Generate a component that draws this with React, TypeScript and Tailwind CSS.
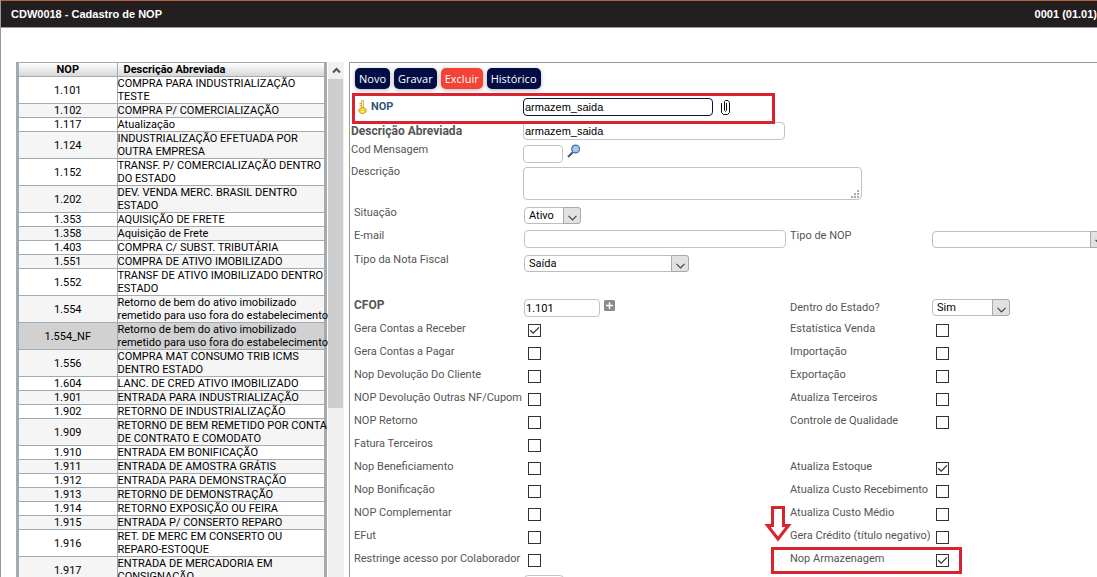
import { useState } from "react";
import type { ReactNode } from "react";

type Nop = { code: string; description: string };

const nops: Nop[] = [
  { code: "1.101", description: "COMPRA PARA INDUSTRIALIZAÇÃO\nTESTE" },
  { code: "1.102", description: "COMPRA P/ COMERCIALIZAÇÃO" },
  { code: "1.117", description: "Atualização" },
  { code: "1.124", description: "INDUSTRIALIZAÇÃO EFETUADA POR\nOUTRA EMPRESA" },
  { code: "1.152", description: "TRANSF. P/ COMERCIALIZAÇÃO DENTRO\nDO ESTADO" },
  { code: "1.202", description: "DEV. VENDA MERC. BRASIL DENTRO\nESTADO" },
  { code: "1.353", description: "AQUISIÇÃO DE FRETE" },
  { code: "1.358", description: "Aquisição de Frete" },
  { code: "1.403", description: "COMPRA C/ SUBST. TRIBUTÁRIA" },
  { code: "1.551", description: "COMPRA DE ATIVO IMOBILIZADO" },
  { code: "1.552", description: "TRANSF DE ATIVO IMOBILIZADO DENTRO\nESTADO" },
  { code: "1.554", description: "Retorno de bem do ativo imobilizado\nremetido para uso fora do estabelecimento" },
  { code: "1.554_NF", description: "Retorno de bem do ativo imobilizado\nremetido para uso fora do estabelecimento" },
  { code: "1.556", description: "COMPRA MAT CONSUMO TRIB ICMS\nDENTRO ESTADO" },
  { code: "1.604", description: "LANC. DE CRED ATIVO IMOBILIZADO" },
  { code: "1.901", description: "ENTRADA PARA INDUSTRIALIZAÇÃO" },
  { code: "1.902", description: "RETORNO DE INDUSTRIALIZAÇÃO" },
  { code: "1.909", description: "RETORNO DE BEM REMETIDO POR CONTA\nDE CONTRATO E COMODATO" },
  { code: "1.910", description: "ENTRADA EM BONIFICAÇÃO" },
  { code: "1.911", description: "ENTRADA DE AMOSTRA GRÁTIS" },
  { code: "1.912", description: "ENTRADA PARA DEMONSTRAÇÃO" },
  { code: "1.913", description: "RETORNO DE DEMONSTRAÇÃO" },
  { code: "1.914", description: "RETORNO EXPOSIÇÃO OU FEIRA" },
  { code: "1.915", description: "ENTRADA P/ CONSERTO REPARO" },
  { code: "1.916", description: "RET. DE MERC EM CONSERTO OU\nREPARO-ESTOQUE" },
  { code: "1.917", description: "ENTRADA DE MERCADORIA EM\nCONSIGNAÇÃO" },
];

type Flag = { label: string; checked?: boolean; marked?: boolean };

const flagRows: [Flag, Flag | null][] = [
  [{ label: "Gera Contas a Receber", checked: true }, { label: "Estatística Venda" }],
  [{ label: "Gera Contas a Pagar" }, { label: "Importação" }],
  [{ label: "Nop Devolução Do Cliente" }, { label: "Exportação" }],
  [{ label: "NOP Devolução Outras NF/Cupom" }, { label: "Atualiza Terceiros" }],
  [{ label: "NOP Retorno" }, { label: "Controle de Qualidade" }],
  [{ label: "Fatura Terceiros" }, null],
  [{ label: "Nop Beneficiamento" }, { label: "Atualiza Estoque", checked: true }],
  [{ label: "Nop Bonificação" }, { label: "Atualiza Custo Recebimento" }],
  [{ label: "NOP Complementar" }, { label: "Atualiza Custo Médio" }],
  [{ label: "EFut" }, { label: "Gera Crédito (título negativo)" }],
  [
    { label: "Restringe acesso por Colaborador" },
    { label: "Nop Armazenagem", checked: true, marked: true },
  ],
];

const input =
  "block h-[18px] rounded-[4px] border border-[#c4c4c4] bg-white px-px text-[11px] text-black outline-none";
const topRow = "grid grid-cols-[172px_1fr] items-start pl-px";
const formRow = "grid grid-cols-[170px_266px_142px_1fr] items-start pl-1";

function ActionButton({ children, danger }: { children: ReactNode; danger?: boolean }) {
  return (
    <button
      type="button"
      className={`h-[21px] rounded-[5px] px-1 font-['Open_Sans',sans-serif] text-[11px] leading-[21px] text-white shadow-[0_1px_4px_rgba(0,0,0,0.3)] ${
        danger ? "bg-[#f44336]" : "bg-[#020d45]"
      }`}
    >
      {children}
    </button>
  );
}

function Select({ id, options, className }: { id: string; options: string[]; className: string }) {
  return (
    <div className={`relative h-[17px] ${className}`}>
      <select
        id={id}
        className="block size-full appearance-none rounded-[4px] border border-[#bdbdbd] bg-white pl-1 text-[11px] leading-[15px] text-black outline-none"
      >
        {options.map((option) => (
          <option key={option}>{option}</option>
        ))}
      </select>
      <span className="pointer-events-none absolute inset-y-0 right-0 flex w-[18px] items-center justify-center rounded-r-[3px] border border-[#a9a9a9] bg-[#e1e1e1]">
        <svg width="9" height="6" viewBox="0 0 9 6" fill="none" stroke="#444" className="mt-1">
          <path d="M0.5 0.8L4.5 4.8L8.5 0.8" strokeWidth="1.2" />
        </svg>
      </span>
    </div>
  );
}

function FlagField({ id, flag }: { id: string; flag: Flag }) {
  const [checked, setChecked] = useState(Boolean(flag.checked));

  return (
    <>
      <label htmlFor={id} className="leading-[17px] whitespace-nowrap">
        {flag.label}
      </label>
      <div className="relative mt-1 ml-1 size-[13px]">
        <input
          id={id}
          type="checkbox"
          checked={checked}
          onChange={(e) => setChecked(e.target.checked)}
          className="block size-full appearance-none border border-[#333] bg-white"
        />
        {checked && (
          <svg
            viewBox="0 0 13 13"
            className="pointer-events-none absolute inset-0 size-[13px]"
            fill="none"
            stroke="#333"
            strokeWidth="1.3"
          >
            <path d="M2.2 6.2L5.2 9.2L11 3.4" />
          </svg>
        )}
      </div>
    </>
  );
}

function ArmazenagemMark() {
  return (
    <>
      <span className="pointer-events-none absolute -top-[3px] left-[421px] h-[27px] w-[191px] border-3 border-[#d9232e]" />
      <svg
        viewBox="0 0 28 37"
        className="pointer-events-none absolute -top-[45px] left-[414px] h-[37px] w-[28px]"
        fill="#fff"
        stroke="#d9232e"
        strokeWidth="3"
      >
        <path d="M8.5 2.5H19.5V20.5H24.5L14 34L3.5 20.5H8.5Z" />
      </svg>
    </>
  );
}

function NopTable() {
  const [selected, setSelected] = useState("1.554_NF");

  return (
    <div className="flex w-[328px] shrink-0 overflow-hidden">
      <div className="w-[311px] shrink-0 border-x-3 border-t border-[#a3aab0]">
        <table className="w-full table-fixed border-collapse leading-[13px] text-black">
          <colgroup>
            <col className="w-[98px]" />
            <col />
          </colgroup>
          <thead>
            <tr className="h-[13px] border-b border-[#a3aab0] bg-linear-to-b from-white to-[#d8d8d8]">
              <th className="border-r border-[#a3aab0] p-0 font-bold">NOP</th>
              <th className="p-0 pl-[6px] text-left font-bold">Descrição Abreviada</th>
            </tr>
          </thead>
          <tbody>
            {nops.map((nop, i) => (
              <tr
                key={nop.code}
                onClick={() => setSelected(nop.code)}
                className={`border-b border-[#a3aab0] ${
                  nop.code === selected ? "bg-[#d1d1d1]" : i % 2 ? "bg-[#f5f5f5]" : "bg-white"
                }`}
              >
                <td className="border-r border-[#a3aab0] p-0 text-center">{nop.code}</td>
                <td className="p-0 whitespace-pre">{nop.description}</td>
              </tr>
            ))}
          </tbody>
        </table>
      </div>
      <div className="ml-px w-4 bg-[#f0f0f0]">
        <div className="flex h-[17px] items-center justify-center">
          <svg width="9" height="7" viewBox="0 0 9 7" fill="none" stroke="#505050" strokeWidth="2">
            <path d="M1 5.5L4.5 2L8 5.5" />
          </svg>
        </div>
        <div className="h-[329px] w-[15px] bg-[#cdcdcd]" />
      </div>
    </div>
  );
}

function NopForm() {
  return (
    <form className="ml-[5px] min-w-0 flex-1 overflow-hidden border-t border-l border-[#999] text-[#555]">
      <div className="flex gap-1 pt-[5px] pb-1 pl-[5px]">
        <ActionButton>Novo</ActionButton>
        <ActionButton>Gravar</ActionButton>
        <ActionButton danger>Excluir</ActionButton>
        <ActionButton>Histórico</ActionButton>
      </div>

      <div className="relative grid h-7 grid-cols-[172px_1fr] items-center pl-px">
        <label htmlFor="nop" className="flex items-center gap-1 pl-[7px] font-bold text-[#34547a]">
          <svg width="9" height="14" viewBox="0 0 9 14">
            <path d="M3.5 0.5H5.5V8H3.5Z" fill="#fff3b0" stroke="#c9a63c" strokeWidth="0.8" />
            <path d="M1.5 3.5H3.5M1.5 5.5H3.5" stroke="#c9a63c" />
            <path d="M3 7.5H6L8.3 9.5V11.5L6 13.5H3L0.7 11.5V9.5Z" fill="#f8d030" stroke="#c99a1c" strokeWidth="0.8" />
            <circle cx="4.5" cy="11.5" r="0.9" fill="#fff" />
          </svg>
          NOP
        </label>
        <div className="flex items-center">
          <input
            id="nop"
            defaultValue="armazem_saida"
            className="block h-[18px] w-[190px] rounded-[4px] border border-[#0a1440] bg-white px-px font-['Liberation_Sans',Arial,sans-serif] text-[11px] text-black outline-none"
          />
          <button type="button" aria-label="Anexos" className="ml-2">
            <svg width="9" height="15" viewBox="0 0 9 15" fill="none" stroke="#111" strokeWidth="1" className="block">
              <path d="M0.5 3V12.5L2.5 14.5H6.5L8.5 12.5V2.5L7 0.5H4.5L3.5 1.5V10.5L4.5 11.5L5.5 10.5V3" />
            </svg>
          </button>
        </div>
        <span className="pointer-events-none absolute top-0 left-[2px] h-[31px] w-[423px] border-3 border-[#d9232e]" />
      </div>

      <div className="grid h-5 grid-cols-[172px_1fr] items-center pl-px">
        <label htmlFor="abreviada" className="text-xs font-bold">Descrição Abreviada</label>
        <input
          id="abreviada"
          defaultValue="armazem_saida"
          className={`${input} w-[262px] font-['Liberation_Sans',Arial,sans-serif]`}
        />
      </div>

      <div className={`${topRow} h-[22px]`}>
        <label htmlFor="mensagem" className="leading-[18px]">Cod Mensagem</label>
        <div className="flex gap-1">
          <input id="mensagem" className={`${input} mt-1 w-10`} />
          <button type="button" aria-label="Pesquisar mensagem" className="mt-[3px] self-start">
            <svg width="14" height="14" viewBox="0 0 14 14" className="block">
              <path d="M1 13L5.8 8.2" stroke="#555" strokeWidth="2" />
              <circle cx="8.6" cy="5" r="3.9" fill="#9cc9f5" stroke="#4d6c96" strokeWidth="1.2" />
            </svg>
          </button>
        </div>
      </div>

      <div className={`${topRow} h-[41px]`}>
        <label htmlFor="descricao" className="leading-[18px]">Descrição</label>
        <div className="relative mt-1 w-[339px]">
          <textarea
            id="descricao"
            className="block h-[33px] w-full resize-none rounded-[4px] border border-[#c4c4c4] bg-white px-[2px] text-black outline-none"
          />
          <svg viewBox="0 0 8 8" className="pointer-events-none absolute right-[3px] bottom-[2px] size-2" fill="#aaa">
            <path d="M0 6h2v2H0zM3 6h2v2H3zM6 6h2v2H6zM3 3h2v2H3zM6 3h2v2H6zM6 0h2v2H6z" />
          </svg>
        </div>
      </div>

      <div className={`${formRow} h-[23px]`}>
        <label htmlFor="situacao" className="leading-[17px]">Situação</label>
        <Select id="situacao" options={["Ativo", "Inativo"]} className="mt-[3px] w-[57px]" />
      </div>

      <div className={`${formRow} h-6`}>
        <label htmlFor="email" className="leading-[18px]">E-mail</label>
        <input id="email" type="text" className={`${input} mt-[3px] w-[262px]`} />
        <label htmlFor="tipo-nop" className="leading-[18px]">Tipo de NOP</label>
        <Select id="tipo-nop" options={["", "Entrada", "Saída"]} className="mt-1 w-[176px]" />
      </div>

      <div className={`${formRow} h-[45px]`}>
        <label htmlFor="tipo-nota" className="leading-[18px]">Tipo da Nota Fiscal</label>
        <Select id="tipo-nota" options={["Saída", "Entrada"]} className="mt-1 w-[165px]" />
      </div>

      <div className={`${formRow} h-6`}>
        <label htmlFor="cfop" className="text-xs leading-[18px] font-bold">CFOP</label>
        <div className="mt-[3px] flex gap-1">
          <input id="cfop" defaultValue="1.101" className={`${input} w-[76px]`} />
          <button type="button" aria-label="Adicionar CFOP" className="mt-px self-start">
            <svg width="11" height="11" viewBox="0 0 11 11" className="block">
              <rect width="11" height="11" rx="1.5" fill="#8a8a8a" />
              <path d="M5.5 2V9M2 5.5H9" stroke="#fff" strokeWidth="1.4" />
            </svg>
          </button>
        </div>
        <label htmlFor="dentro" className="mt-[3px] leading-[18px]">Dentro do Estado?</label>
        <Select id="dentro" options={["Sim", "Não"]} className="mt-[3px] w-[78px]" />
      </div>

      {flagRows.map(([left, right], i) => (
        <div key={left.label} className={`${formRow} relative h-[23px]`}>
          <FlagField id={`flag-a${i}`} flag={left} />
          {right && <FlagField id={`flag-b${i}`} flag={right} />}
          {right?.marked && <ArmazenagemMark />}
        </div>
      ))}

      <div className={`${formRow} pt-[2px]`}>
        <span />
        <input aria-label="Colaborador" className={`${input} w-10`} />
      </div>
    </form>
  );
}

export default function App() {
  return (
    <div className="flex h-screen flex-col overflow-hidden border-l border-[#999] bg-white font-[Roboto,sans-serif] text-[11px]">
      <header className="flex h-7 shrink-0 items-center justify-between border-t border-b border-t-[#b5623f] border-b-[#999] bg-[#231f20] pl-[10px] font-['Liberation_Sans',Arial,sans-serif] font-bold text-white">
        <h1>CDW0018 - Cadastro de NOP</h1>
        <span className="whitespace-nowrap">0001 (01.01)</span>
      </header>
      <main className="flex min-h-0 flex-1 pt-[34px] pl-[15px]">
        <NopTable />
        <NopForm />
      </main>
    </div>
  );
}
